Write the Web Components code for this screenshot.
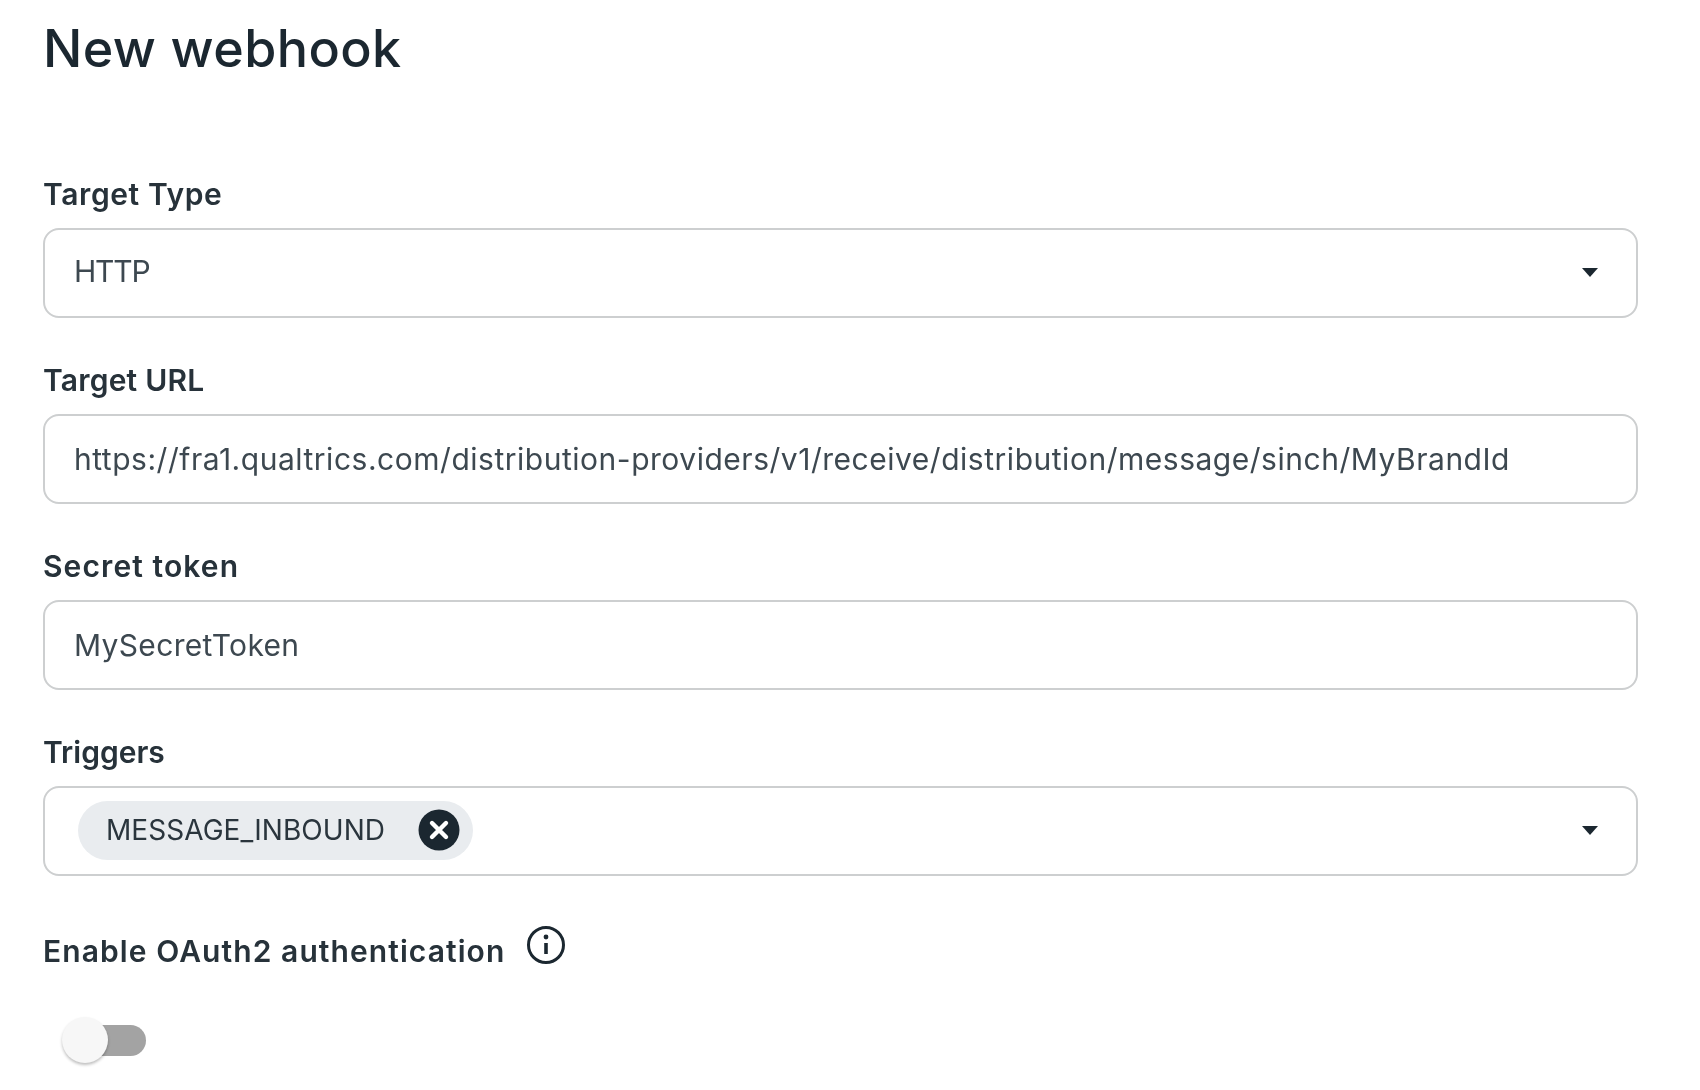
<!DOCTYPE html>
<html>
<head>
<meta charset="utf-8">
<title>New webhook</title>
<style>
  html, body { margin: 0; background: #fff; }
  body { font-family: Inter, "Liberation Sans", sans-serif; color: #1b2730; }
</style>
</head>
<body>
<webhook-form>
  <form-field label="Target Type" select style="--label-ls:.6px;--value-ls:-1.2px;--value-pb:4px">HTTP</form-field>
  <form-field label="Target URL" style="--label-ls:.2px;--value-ls:.52px">https://fra1.qualtrics.com/distribution-providers/v1/receive/distribution/message/sinch/MyBrandId</form-field>
  <form-field label="Secret token" style="--label-ls:1.1px;--value-ls:.33px">MySecretToken</form-field>
  <form-field label="Triggers" select style="--value-pb:2px"><trigger-chip>MESSAGE_INBOUND</trigger-chip></form-field>
  <oauth-toggle></oauth-toggle>
</webhook-form>

<script>
class WebhookForm extends HTMLElement {
  constructor() {
    super();
    this.shadowDOM = this.attachShadow({mode: "open"});
    this.shadowDOM.innerHTML = `
      <style>
        :host {
          display: block;
          width: 1638px;
          height: 1090px;
          box-sizing: border-box;
          padding: 15px 0 0 43px;
          overflow: hidden;
          filter: blur(.5px);
        }
        h1 {
          margin: 0 0 93px;
          font-size: 52px;
          line-height: 68px;
          font-weight: 500;
          letter-spacing: .4px;
          color: #1b2730;
        }
        .fields {
          display: flex;
          flex-direction: column;
          gap: 44px;
        }
      </style>
      <h1>New webhook</h1>
      <div class="fields"><slot></slot></div>
    `;
  }
}

class FormField extends HTMLElement {
  constructor() {
    super();
    this.shadowDOM = this.attachShadow({mode: "open"});
  }
  connectedCallback() {
    this.render();
  }
  render() {
    const arrow = this.hasAttribute('select')
      ? `<svg class="arrow" width="16" height="9" viewBox="0 0 16 9"><path d="M0 0h16L8 9z" fill="#1b2730"/></svg>`
      : '';
    this.shadowDOM.innerHTML = `
      <style>
        :host { display: block; }
        label {
          display: block;
          height: 37px;
          margin-bottom: 15px;
          font-size: 30px;
          line-height: 37px;
          font-weight: 600;
          letter-spacing: var(--label-ls, 0);
          color: #27323a;
        }
        .box {
          box-sizing: border-box;
          height: 90px;
          display: flex;
          align-items: center;
          justify-content: space-between;
          padding: 0 38px 0 29px;
          border: 2px solid #cdcfd0;
          border-radius: 16px;
          font-size: 30px;
          letter-spacing: var(--value-ls, 0);
          color: #3d4850;
          white-space: nowrap;
        }
        .box span { display: flex; padding-bottom: var(--value-pb, 0); }
        .arrow { margin-bottom: 2px; }
      </style>
      <label>${this.getAttribute('label')}</label>
      <div class="box"><span><slot></slot></span>${arrow}</div>
    `;
  }
}

class TriggerChip extends HTMLElement {
  constructor() {
    super();
    this.shadowDOM = this.attachShadow({mode: "open"});
    this.shadowDOM.innerHTML = `
      <style>
        :host {
          display: inline-flex;
          align-items: center;
          justify-content: space-between;
          box-sizing: border-box;
          width: 395px;
          height: 59px;
          margin-left: 4px;
          padding: 0 13px 0 28px;
          border-radius: 30px;
          background: #e9ecef;
          font-size: 28px;
          letter-spacing: .05px;
          color: #2a353d;
        }
        svg { display: block; }
      </style>
      <span><slot></slot></span>
      <svg width="42" height="42" viewBox="0 0 42 42">
        <circle cx="21" cy="21" r="20.5" fill="#1b2730"/>
        <path d="M14 14l14 14M28 14L14 28" stroke="#fff" stroke-width="4.4" stroke-linecap="round"/>
      </svg>
    `;
  }
}

class OauthToggle extends HTMLElement {
  constructor() {
    super();
    this.shadowDOM = this.attachShadow({mode: "open"});
    this.shadowDOM.innerHTML = `
      <style>
        :host { display: block; margin-top: 6px; }
        .label {
          display: flex;
          align-items: flex-start;
          gap: 21px;
          font-size: 30px;
          line-height: 37px;
          font-weight: 600;
          letter-spacing: 1.08px;
          color: #27323a;
        }
        .label span { padding-top: 7px; }
        .info { display: block; margin-top: -1px; }
        .switch {
          position: relative;
          width: 80px;
          height: 31px;
          margin: 55px 0 0 23px;
          border-radius: 16px;
          background: #a3a3a3;
        }
        .knob {
          position: absolute;
          left: -4px;
          top: -8px;
          width: 46px;
          height: 46px;
          border-radius: 50%;
          background: #f7f7f7;
          box-shadow: 0 2px 3px rgba(0,0,0,0.25);
        }
      </style>
      <div class="label">
        <span>Enable OAuth2 authentication</span>
        <svg class="info" width="40" height="40" viewBox="0 0 40 40" fill="none" stroke="#1b2730">
          <circle cx="20" cy="20" r="17.5" stroke-width="3"/>
          <path d="M20 18v11" stroke-width="3.6"/>
          <circle cx="20" cy="12" r="2.4" fill="#1b2730" stroke="none"/>
        </svg>
      </div>
      <div class="switch"><div class="knob"></div></div>
    `;
  }
}

customElements.define("webhook-form", WebhookForm);
customElements.define("form-field", FormField);
customElements.define("trigger-chip", TriggerChip);
customElements.define("oauth-toggle", OauthToggle);
</script>
</body>
</html>
